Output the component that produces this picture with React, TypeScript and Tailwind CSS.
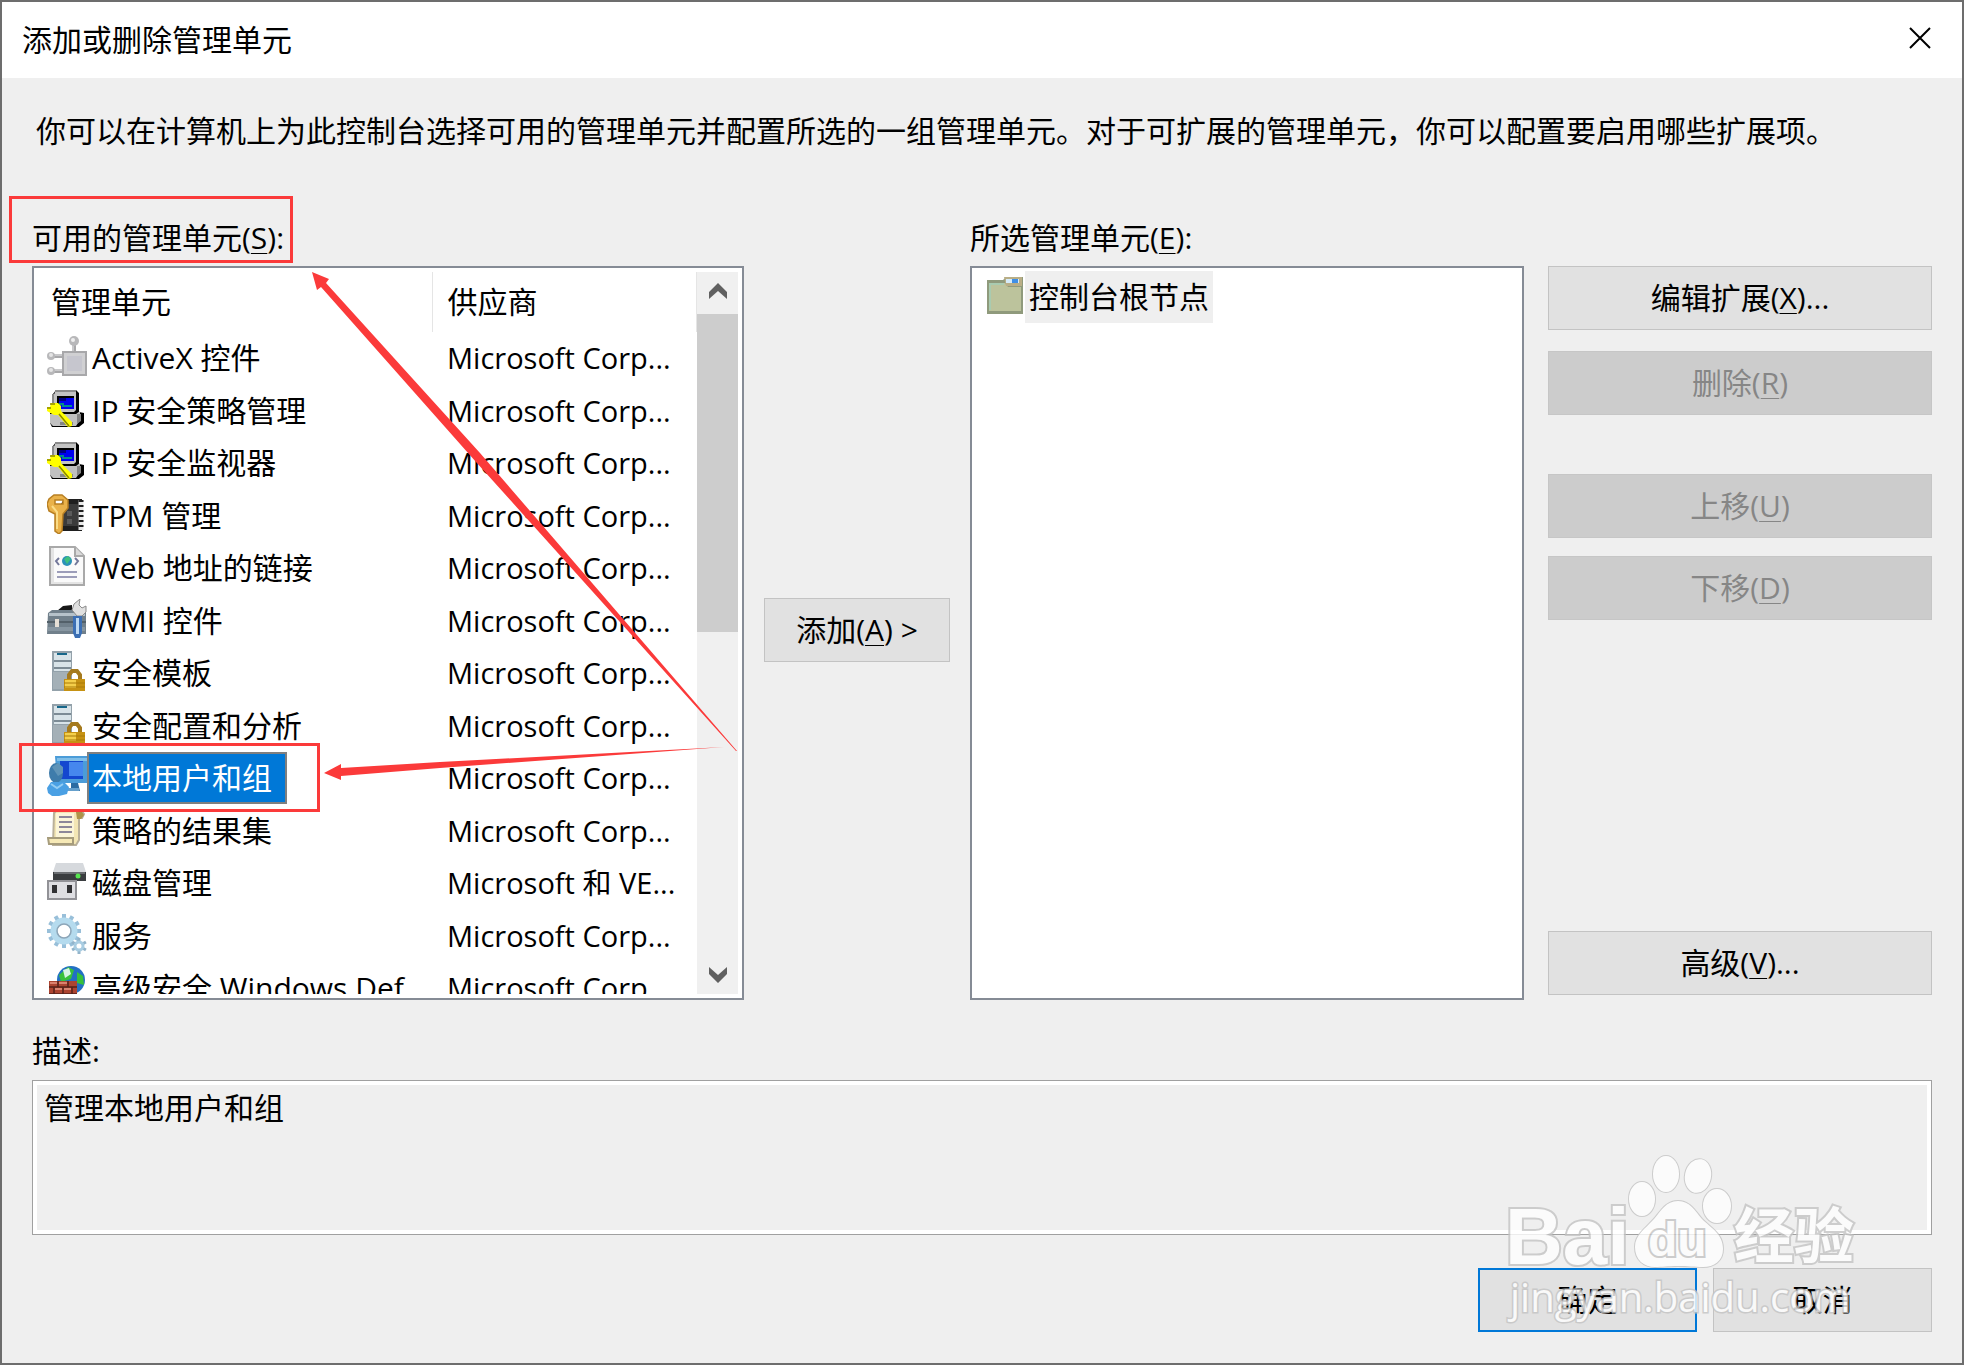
import { useState } from "react";

type IconName =
  | "activex"
  | "ipsec"
  | "tpm"
  | "web"
  | "wmi"
  | "server"
  | "users"
  | "scroll"
  | "disk"
  | "gear"
  | "firewall";

interface Snapin {
  name: string;
  vendor: string;
  icon: IconName;
}

const snapins: Snapin[] = [
  { name: "ActiveX 控件", vendor: "Microsoft Corp...", icon: "activex" },
  { name: "IP 安全策略管理", vendor: "Microsoft Corp...", icon: "ipsec" },
  { name: "IP 安全监视器", vendor: "Microsoft Corp...", icon: "ipsec" },
  { name: "TPM 管理", vendor: "Microsoft Corp...", icon: "tpm" },
  { name: "Web 地址的链接", vendor: "Microsoft Corp...", icon: "web" },
  { name: "WMI 控件", vendor: "Microsoft Corp...", icon: "wmi" },
  { name: "安全模板", vendor: "Microsoft Corp...", icon: "server" },
  { name: "安全配置和分析", vendor: "Microsoft Corp...", icon: "server" },
  { name: "本地用户和组", vendor: "Microsoft Corp...", icon: "users" },
  { name: "策略的结果集", vendor: "Microsoft Corp...", icon: "scroll" },
  { name: "磁盘管理", vendor: "Microsoft 和 VE...", icon: "disk" },
  { name: "服务", vendor: "Microsoft Corp...", icon: "gear" },
  { name: "高级安全 Windows Def", vendor: "Microsoft Corp", icon: "firewall" },
];

const GEAR_TEETH = [0, 30, 60, 90, 120, 150, 180, 210, 240, 270, 300, 330];

function SnapinIcon({ name }: { name: IconName }) {
  return (
    <svg className="h-10 w-10 shrink-0" viewBox="0 0 40 40" aria-hidden="true">
      {name === "activex" && (
        <g>
          <path d="M27 8v8M6 20h10M6 35h10" stroke="#a8a8aa" strokeWidth="4" />
          <path d="M26 8v8M6 19h10M6 34h10" stroke="#c9c9cb" strokeWidth="2" />
          <rect x="16" y="16" width="23" height="23" fill="#d0d0d2" stroke="#a8a8aa" strokeWidth="2" />
          <rect x="20" y="20" width="15" height="15" fill="#c6c6ce" />
          <circle cx="27" cy="5" r="5" fill="#b8b8ba" />
          <circle cx="4" cy="20" r="4" fill="#b8b8ba" />
          <circle cx="4" cy="35" r="4" fill="#b8b8ba" />
          <circle cx="26" cy="4" r="2" fill="#efefef" />
          <circle cx="4" cy="19" r="2" fill="#e4e4e4" />
          <circle cx="4" cy="34" r="2" fill="#e4e4e4" />
        </g>
      )}
      {name === "ipsec" && (
        <g>
          <path d="M9 1h20l3 3v19l5 1v10l-5 4H5l-2-4V24h3V5z" fill="#000" />
          <path d="M8 1h21v2H8zM5 5h3v17H5z" fill="#8a8a8a" />
          <path d="M8 3h21v18l-2 2H7V6z" fill="#c3c3c3" />
          <path d="M10 7h17v13H10z" fill="#000" />
          <path d="M12 9h15v11H12z" fill="#0000f0" />
          <path d="M12 9h7v3h-7z" fill="#000080" />
          <path d="M12 14h5v2h8v2H15v-2h-3z" fill="#008b8b" />
          <path d="M3 25h26l4-3v9l-4 6H6l-3-3z" fill="#c0c0c0" />
          <path d="M13 33h13v3H13zM30 25h4v7l-4 3z" fill="#858585" />
          <path d="M4 14h7l3 3v5l11 11 0 4-4 1-10-12H7l-7-4v-4h3z" fill="#ffff00" />
          <path d="M12 25l10 12M3 15h5M0 19h4" stroke="#8a8600" strokeWidth="1.5" fill="none" />
        </g>
      )}
      {name === "tpm" && (
        <g>
          <path d="M17 5h18v32H14V10z" fill="#1f1f1f" />
          <path d="M17 10h14v22H15V14z" fill="#3b3b3b" />
          <path d="M20 17h5v5h-5zM20 25h5v5h-5z" fill="#5b5b5b" />
          <path d="M34 6v30" stroke="#e8e8e8" strokeWidth="5" />
          <path d="M34 6v30" stroke="#202020" strokeWidth="5" strokeDasharray="2 3" />
          <path
            fillRule="evenodd"
            d="M7 1h8l6 5v8l-5 6-1 17-3 3-4-3V20l-6-3-2-7 2-5zm1 5v4h8V6z"
            fill="#eab24a"
            stroke="#b87f22"
            strokeWidth="1.5"
          />
          <path d="M5 12l5 6v17" stroke="#fbdc86" strokeWidth="2" fill="none" />
        </g>
      )}
      {name === "web" && (
        <g>
          <path d="M3 1h25l9 9v29H3z" fill="#fafafa" stroke="#a9a9a9" strokeWidth="2" />
          <path d="M4 38V2h3v34h29v2z" fill="#e4e4e4" />
          <path d="M28 1v9h9" fill="#dadada" stroke="#a9a9a9" strokeWidth="2" />
          <circle cx="20" cy="15" r="5" fill="#2a91b8" />
          <path d="M17 13l4-3 3 3-4 5z" fill="#3fc07e" />
          <path d="M12 12l-3 3 3 4M28 12l3 3-3 4" stroke="#73789a" strokeWidth="2" fill="none" />
          <path d="M10 26h20M10 31h20" stroke="#9c9db9" strokeWidth="2" />
        </g>
      )}
      {name === "wmi" && (
        <g>
          <path d="M10 12l6-5 9-1v6z" fill="#171717" />
          <path d="M1 14l4-3h34v24H0z" fill="#71808b" />
          <path d="M2 14h36v3H2z" fill="#b6c2ca" />
          <path d="M0 22h39v2H0z" fill="#536069" />
          <path d="M1 28h37v4H1z" fill="#8796a1" />
          <rect x="8" y="20" width="4" height="8" fill="#e5dfd6" />
          <path d="M30 17l-5-6 2-6 6-5-1 6 3 3 4-2v6l-4 4z" fill="#e0e0e0" stroke="#8b8b8b" />
          <path d="M26 17h9v17l-2 5h-5l-2-5z" fill="#3c6fb4" />
          <path d="M29 19h3v16h-3z" fill="#bdd9f4" />
        </g>
      )}
      {name === "server" && (
        <g>
          <path d="M5 0h20v40H5z" fill="#93a1aa" />
          <path d="M7 2h17v18H7z" fill="#d8e3e8" />
          <path d="M10 2h10v2H10z" fill="#17678a" />
          <path d="M7 10h17M7 17h17" stroke="#7c8b95" strokeWidth="2" />
          <path d="M6 21h18v17H6z" fill="#a4b0b7" />
          <path d="M22 29v-5l3-4h5l3 4v5" fill="none" stroke="#a57a1e" strokeWidth="4" />
          <rect x="17" y="28" width="21" height="12" fill="#c69213" />
          <path d="M18 29h11v8H18z" fill="#f4cf4b" />
          <path d="M17 32h21M17 36h21" stroke="#a97a0a" strokeWidth="1" />
        </g>
      )}
      {name === "users" && (
        <g>
          <path d="M8 0h32v27H10z" fill="#4b9cd8" />
          <path d="M10 2h30v3H10z" fill="#81bfe8" />
          <path d="M13 5h23v18H13z" fill="#1447cf" />
          <path d="M22 6h14v14H22z" fill="#4687ee" />
          <path d="M24 27h7l2 8h-9z" fill="#2c6ca2" />
          <path d="M20 32h12v3H20z" fill="#66a0cc" />
          <ellipse cx="9" cy="17" rx="7" ry="10" fill="#3e7cab" />
          <path d="M5 11l6-4 5 4v6l-5 3z" fill="#5f94b8" />
          <path d="M0 32l4-6h13l5 5-2 7-8 2H5l-4-3z" fill="#4aa0e4" />
          <path d="M4 28l6 4 6-4" fill="none" stroke="#93cdf4" strokeWidth="2" />
        </g>
      )}
      {name === "scroll" && (
        <g>
          <path d="M7 4l3-3h24l3 4-2 4h-3v22l-3 5H6z" fill="#f3e6b4" stroke="#b9b09a" strokeWidth="2" />
          <path d="M29 3h6l2 3-3 4h-4z" fill="#ad9449" />
          <path d="M9 4h18v24H9z" fill="#fbf5d8" />
          <path d="M12 8h13M12 13h13M12 18h13M12 23h13" stroke="#8d8799" strokeWidth="2" />
          <path d="M1 29h25v6H2z" fill="#f6e9b6" stroke="#a69c7c" strokeWidth="2" />
        </g>
      )}
      {name === "disk" && (
        <g>
          <path d="M9 2h27l3 9H6z" fill="#d6d9dd" />
          <path d="M6 11h33v9H6z" fill="#3a3d40" />
          <path d="M7 11h31v2H7z" fill="#6b6e72" />
          <circle cx="31" cy="15" r="2.5" fill="#56e650" />
          <rect x="1" y="20" width="28" height="18" fill="#dedee2" stroke="#929297" strokeWidth="2" />
          <path d="M5 24h5v8H5zM20 24h5v8h-5z" fill="#303033" />
        </g>
      )}
      {name === "gear" && (
        <g>
          <g fill="none" stroke="#98bfd9" strokeWidth="4">
            {GEAR_TEETH.map((a) => (
              <path key={a} d="M17 0v6" transform={`rotate(${a} 17 17)`} />
            ))}
          </g>
          <circle cx="17" cy="17" r="10" fill="#fff" stroke="#b5dbee" strokeWidth="7" />
          <circle cx="17" cy="17" r="7" fill="none" stroke="#8ea6b8" strokeWidth="1.5" />
          <g fill="none" stroke="#93b4ca" strokeWidth="3">
            {GEAR_TEETH.filter((a) => a % 60 === 0).map((a) => (
              <path key={a} d="M32 24v4" transform={`rotate(${a} 32 32)`} />
            ))}
          </g>
          <circle cx="32" cy="32" r="4" fill="#fff" stroke="#a9cde2" strokeWidth="3" />
        </g>
      )}
      {name === "firewall" && (
        <g>
          <circle cx="24" cy="14" r="14" fill="#2270c4" />
          <path d="M12 9l9-8 6 3-3 9-10 3zM30 6l6 4 1 9-7-2z" fill="#37c13c" />
          <path d="M16 4l6-2 2 6-6 4z" fill="#d5f5e4" />
          <rect x="2" y="15" width="28" height="25" fill="#ac4431" />
          <path
            d="M2 21h28M2 28h28M2 35h28M11 15v6M21 15v6M7 21v7M16 21v7M25 21v7M11 28v7M21 28v7"
            stroke="#54211a"
            strokeWidth="1.5"
          />
          <path d="M3 17h7M12 17h8M8 23h7M17 23h7M3 30h7M12 30h8" stroke="#d98270" strokeWidth="2" />
        </g>
      )}
    </svg>
  );
}

function FolderIcon() {
  return (
    <svg className="h-10 w-9 shrink-0" viewBox="0 0 36 40" aria-hidden="true">
      <path d="M0 3h16l3-3h17v37H0z" fill="#8f9a7c" />
      <path d="M2 6h16l3 4h13v24H2z" fill="#bcc39c" />
      <path d="M2 6h15v2H4v25H2z" fill="#a9cbb0" />
      <path d="M17 0h18v9H19z" fill="#b9ae86" />
      <path d="M19 2h13v4H19z" fill="#d6ecfb" />
      <path d="M25 2h6v4h-6z" fill="#3f8fe6" />
    </svg>
  );
}

function Key({ children }: { children: string }) {
  return <span className="underline decoration-1 underline-offset-4">{children}</span>;
}

const btn = "flex h-16 items-center justify-center border border-[#c3c3c3] bg-[#e1e1e1] text-[30px] leading-10";
const btnOff = "flex h-16 items-center justify-center border border-[#c6c6c6] bg-[#cccccc] text-[30px] leading-10 text-[#868686]";

function Annotations() {
  return (
    <svg className="pointer-events-none absolute -top-0.5 -left-0.5 h-[840px] w-[780px]" viewBox="0 0 780 840" aria-hidden="true">
      <rect x="10.5" y="197.5" width="281" height="64" fill="none" stroke="#fb3a3a" strokeWidth="3" />
      <rect x="20.5" y="744.5" width="298" height="66" fill="none" stroke="#fb3a3a" strokeWidth="3" />
      <path d="M312 272l17 7-3 4 154 170 257 298h-1L476 462 321 287l-4 3z" fill="#fb3a3a" />
      <path d="M324 773l17-9v4l99-6 284-15-284 21-99 8v4z" fill="#fb3a3a" />
    </svg>
  );
}

function Watermark() {
  return (
    <svg
      className="pointer-events-none absolute -right-0.5 -bottom-0.5 h-[235px] w-[514px]"
      viewBox="0 0 514 235"
      opacity="0.8"
      fill="#ffffff"
      stroke="#c4c4c4"
      strokeWidth="2"
      paintOrder="stroke"
      aria-hidden="true"
    >
      <text x="55" y="134" fontFamily="Liberation Sans, sans-serif" fontSize="80" fontWeight="700" strokeWidth="4">
        Bai
      </text>
      <ellipse cx="192" cy="69" rx="13" ry="17" />
      <ellipse cx="216" cy="44" rx="13" ry="18" />
      <ellipse cx="248" cy="46" rx="13" ry="17" transform="rotate(12 248 46)" />
      <ellipse cx="267" cy="76" rx="14" ry="17" />
      <path d="M228 71c12 0 17 10 24 18 9 9 21 15 21 30 0 12-9 18-20 18-9 0-15-1-25-1s-16 1-23 1c-11 0-20-7-20-20 0-12 10-18 19-28 7-8 12-18 24-18z" />
      <text x="198" y="126" fontFamily="Liberation Sans, sans-serif" fontSize="48" fontWeight="700" strokeWidth="4">
        du
      </text>
      <text x="284" y="128" fontFamily="Noto Sans CJK SC, sans-serif" fontSize="60" fontWeight="700" strokeWidth="4">
        经验
      </text>
      <text x="60" y="182" fontFamily="Open Sans, sans-serif" fontSize="40" strokeWidth="3">
        jingyan.baidu.com
      </text>
    </svg>
  );
}

export default function App() {
  const [selected, setSelected] = useState(8);

  return (
    <div className="relative flex h-screen flex-col border-2 border-[#6d6d6d] bg-[#efefef] font-['Open_Sans','Noto_Sans_CJK_SC',sans-serif] text-[30px] leading-10 text-black">
      <header className="flex h-[76px] shrink-0 items-center justify-between bg-white pr-[30px] pl-5">
        <h1>添加或删除管理单元</h1>
        <button aria-label="关闭" className="mb-1 flex h-6 w-6 items-center justify-center">
          <svg className="h-6 w-6" viewBox="0 0 24 24" fill="none" stroke="#000" strokeWidth="2">
            <path d="M2 2l20 20M22 2L2 22" />
          </svg>
        </button>
      </header>

      <p className="mt-[33px] shrink-0 pr-8 pl-[34px]">
        你可以在计算机上为此控制台选择可用的管理单元并配置所选的一组管理单元。对于可扩展的管理单元，你可以配置要启用哪些扩展项。
      </p>

      <main className="mt-[67px] flex min-h-0 flex-1 gap-5 px-[30px]">
        <section className="flex min-h-0 min-w-0 flex-[712] flex-col" aria-labelledby="available">
          <h2 id="available" className="mb-2 shrink-0">
            可用的管理单元(<Key>S</Key>):
          </h2>
          <div className="flex min-h-0 flex-1 border-2 border-[#858b95] bg-white p-1">
            <div className="min-w-0 flex-1 overflow-hidden">
              <table className="w-full table-fixed border-collapse text-left whitespace-nowrap">
                <thead>
                  <tr className="h-[60px]">
                    <th className="w-[394px] border-r border-[#e5e5e5] p-0 pl-[13px] font-normal">管理单元</th>
                    <th className="border-r border-[#e5e5e5] p-0 pl-[15px] font-normal">供应商</th>
                  </tr>
                </thead>
                <tbody>
                  {snapins.map((s, i) => (
                    <tr key={s.name} className="h-[53px] odd:h-[52px]" onClick={() => setSelected(i)}>
                      <td className="p-0 pl-[9px]">
                        <div className="flex h-[52px] items-center">
                          <span className="mb-1">
                            <SnapinIcon name={s.icon} />
                          </span>
                          <span
                            className={
                              i === selected
                                ? "border-2 border-[#7f7f7f] bg-[#0078d7] py-1 pr-[13px] pl-[3px] text-white"
                                : "pl-[5px]"
                            }
                          >
                            {s.name}
                          </span>
                        </div>
                      </td>
                      <td className="p-0 pl-[15px] text-[29px]">{s.vendor}</td>
                    </tr>
                  ))}
                </tbody>
              </table>
            </div>
            <div className="flex w-[41px] shrink-0 flex-col bg-[#f0f0f0]">
              <button aria-label="向上滚动" className="flex h-[42px] shrink-0 items-center justify-center pb-1">
                <svg className="h-4 w-[18px]" viewBox="0 0 18 16" fill="#606060">
                  <path d="M0 9l9-9 9 9v7L9 8l-9 8z" />
                </svg>
              </button>
              <div className="h-[44%] bg-[#cdcdcd]" />
              <button aria-label="向下滚动" className="mt-auto flex h-[42px] shrink-0 items-center justify-center pt-1">
                <svg className="h-4 w-[18px]" viewBox="0 0 18 16" fill="#606060">
                  <path d="M0 7l9 9 9-9V0L9 8 0 0z" />
                </svg>
              </button>
            </div>
          </div>
        </section>

        <div className="flex flex-[186] flex-col justify-center pt-[42px]">
          <button className={btn}>
            <span>
              添加(<Key>A</Key>) &gt;
            </span>
          </button>
        </div>

        <section className="flex min-h-0 min-w-0 flex-[554] flex-col" aria-labelledby="chosen">
          <h2 id="chosen" className="mb-2 shrink-0">
            所选管理单元(<Key>E</Key>):
          </h2>
          <div className="min-h-0 flex-1 border-2 border-[#858b95] bg-white px-1 py-[3px]">
            <div className="flex items-center pl-[11px]">
              <FolderIcon />
              <span className="ml-0.5 bg-[#efefef] px-1 py-[6px]">控制台根节点</span>
            </div>
          </div>
        </section>

        <aside className="ml-1 flex min-w-0 flex-[384] flex-col pt-12 pb-[5px]">
          <button className={btn}>
            <span>
              编辑扩展(<Key>X</Key>)...
            </span>
          </button>
          <button disabled className={btnOff + " mt-[21px]"}>
            <span>
              删除(<Key>R</Key>)
            </span>
          </button>
          <button disabled className={btnOff + " mt-[59px]"}>
            <span>
              上移(<Key>U</Key>)
            </span>
          </button>
          <button disabled className={btnOff + " mt-[18px]"}>
            <span>
              下移(<Key>D</Key>)
            </span>
          </button>
          <button className={btn + " mt-auto"}>
            <span>
              高级(<Key>V</Key>)...
            </span>
          </button>
        </aside>
      </main>

      <div className="mt-[31px] flex shrink-0 flex-col px-[30px]">
        <label htmlFor="description">描述:</label>
        <textarea
          id="description"
          readOnly
          value="管理本地用户和组"
          className="mt-[9px] block h-[155px] w-full resize-none border border-[#a0a0a0] bg-[#efefef] px-[11px] py-[7px] outline-4 -outline-offset-5 outline-white"
        />
      </div>

      <footer className="mt-[33px] mb-[31px] flex shrink-0 justify-end gap-4 px-[30px]">
        <button className="flex h-16 w-[219px] items-center justify-center border-2 border-[#0078d7] bg-[#e1e1e1]">确定</button>
        <button className={btn + " w-[219px]"}>取消</button>
      </footer>

      <Annotations />
      <Watermark />
    </div>
  );
}
